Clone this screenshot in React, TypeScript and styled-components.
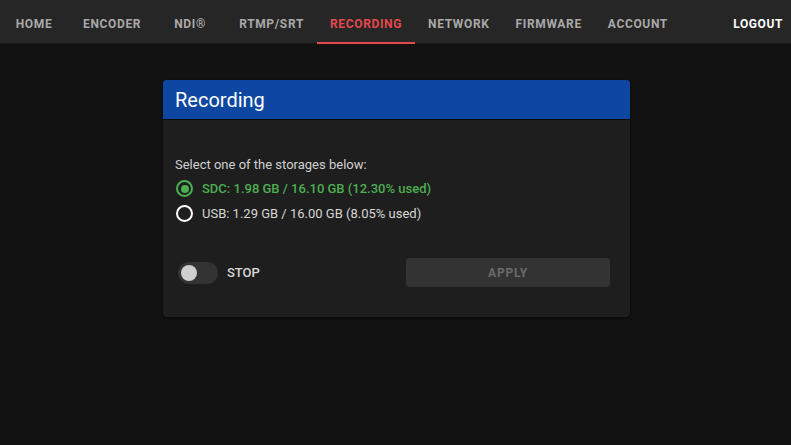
import React, { useState } from "react";
import styled, { createGlobalStyle } from "styled-components";

const GlobalStyle = createGlobalStyle`
    html, body {
        margin: 0;
        padding: 0;
        background: #121212;
        font-family: Roboto, "Noto Sans", Arial, sans-serif;
    }
    * { box-sizing: border-box; }
`;

const Page = styled.div`
    width: 791px;
    height: 445px;
    background: #121212;
    overflow: hidden;
`;

const NavBar = styled.nav`
    display: flex;
    align-items: stretch;
    height: 44px;
    background: #262626;
    border-bottom: 1px solid #1a1a1a;
`;

const Tabs = styled.div`
    display: flex;
    flex: 1;
    margin-left: -2px;
`;

const Tab = styled.div<{ $active?: boolean }>`
    position: relative;
    display: flex;
    align-items: center;
    justify-content: center;
    min-width: 72px;
    padding: 5px 13px 0;
    font-size: 12px;
    font-weight: 700;
    letter-spacing: 0.65px;
    color: ${(p) => (p.$active ? "#e5484d" : "#a9a9a9")};
    cursor: pointer;

    ${(p) =>
        p.$active &&
        `
        &::after {
            content: "";
            position: absolute;
            left: 0;
            right: 0;
            bottom: -1px;
            height: 2px;
            background: #e5484d;
        }
    `}
`;

const Logout = styled.div`
    display: flex;
    align-items: center;
    padding: 5px 8px 0 12px;
    font-size: 12px;
    font-weight: 700;
    letter-spacing: 0.6px;
    color: #ffffff;
`;

const Content = styled.main`
    display: flex;
    justify-content: center;
    padding-top: 36px;
    padding-left: 2px;
`;

const Card = styled.section`
    width: 467px;
    background: #1e1e1e;
    border-radius: 4px;
    overflow: hidden;
    box-shadow: 0 1px 3px rgba(0, 0, 0, 0.6);
`;

const CardHeader = styled.header`
    height: 40px;
    display: flex;
    align-items: center;
    padding: 0 12px;
    background: #0d47a1;
    color: #ffffff;
    font-size: 20px;
    font-weight: 400;
    border-bottom: 1px solid #0a0a0a;
`;

const CardBody = styled.div`
    padding: 35px 12px 30px;
`;

const Hint = styled.div`
    font-size: 13px;
    line-height: 20px;
    color: #d0d0d0;
    margin-bottom: 1px;
`;

const RadioRow = styled.label<{ $checked?: boolean }>`
    display: flex;
    align-items: center;
    gap: 9px;
    height: 25px;
    padding-left: 1px;
    font-size: 13px;
    font-weight: ${(p) => (p.$checked ? 500 : 400)};
    color: ${(p) => (p.$checked ? "#4caf50" : "#d6d6d6")};
    cursor: pointer;
`;

const RadioDot = styled.span<{ $checked?: boolean }>`
    width: 17px;
    height: 17px;
    border-radius: 50%;
    border: 2px solid ${(p) => (p.$checked ? "#4caf50" : "#ffffff")};
    display: flex;
    align-items: center;
    justify-content: center;

    &::after {
        content: "";
        width: 8px;
        height: 8px;
        border-radius: 50%;
        background: ${(p) => (p.$checked ? "#4caf50" : "transparent")};
    }
`;

const Controls = styled.div`
    display: flex;
    align-items: center;
    justify-content: space-between;
    margin-top: 32px;
    padding-right: 8px;
`;

const ToggleWrap = styled.div`
    display: flex;
    align-items: center;
    gap: 9px;
    padding-left: 3px;
`;

const Track = styled.div<{ $on?: boolean }>`
    width: 40px;
    height: 22px;
    border-radius: 11px;
    background: ${(p) => (p.$on ? "#2e7d32" : "#333333")};
    display: flex;
    align-items: center;
    justify-content: ${(p) => (p.$on ? "flex-end" : "flex-start")};
    padding: 0 3px;
    cursor: pointer;
`;

const Thumb = styled.span`
    width: 16px;
    height: 16px;
    border-radius: 50%;
    background: #cfcfcf;
`;

const ToggleLabel = styled.span`
    font-size: 13px;
    font-weight: 500;
    color: #d8d8d8;
`;

const ApplyButton = styled.button`
    width: 204px;
    height: 29px;
    border: none;
    border-radius: 4px;
    background: #333333;
    color: #6a6a6a;
    font-family: inherit;
    font-size: 12px;
    font-weight: 700;
    letter-spacing: 0.8px;
`;

const tabs = ["HOME", "ENCODER", "NDI®", "RTMP/SRT", "RECORDING", "NETWORK", "FIRMWARE", "ACCOUNT"];

const storages = [
    { id: "sdc", text: "SDC: 1.98 GB / 16.10 GB (12.30% used)" },
    { id: "usb", text: "USB: 1.29 GB / 16.00 GB (8.05% used)" },
];

const App: React.FC = () => {
    const [selected, setSelected] = useState("sdc");
    const [recording, setRecording] = useState(false);

    return (
        <Page>
            <GlobalStyle />
            <NavBar>
                <Tabs>
                    {tabs.map((t) => (
                        <Tab key={t} $active={t === "RECORDING"}>{t}</Tab>
                    ))}
                </Tabs>
                <Logout>LOGOUT</Logout>
            </NavBar>
            <Content>
                <Card>
                    <CardHeader>Recording</CardHeader>
                    <CardBody>
                        <Hint>Select one of the storages below:</Hint>
                        {storages.map((s) => (
                            <RadioRow
                                key={s.id}
                                $checked={selected === s.id}
                                onClick={() => setSelected(s.id)}
                            >
                                <RadioDot $checked={selected === s.id} />
                                {s.text}
                            </RadioRow>
                        ))}
                        <Controls>
                            <ToggleWrap>
                                <Track $on={recording} onClick={() => setRecording(!recording)}>
                                    <Thumb />
                                </Track>
                                <ToggleLabel>{recording ? "START" : "STOP"}</ToggleLabel>
                            </ToggleWrap>
                            <ApplyButton disabled>APPLY</ApplyButton>
                        </Controls>
                    </CardBody>
                </Card>
            </Content>
        </Page>
    );
};

export default App;
